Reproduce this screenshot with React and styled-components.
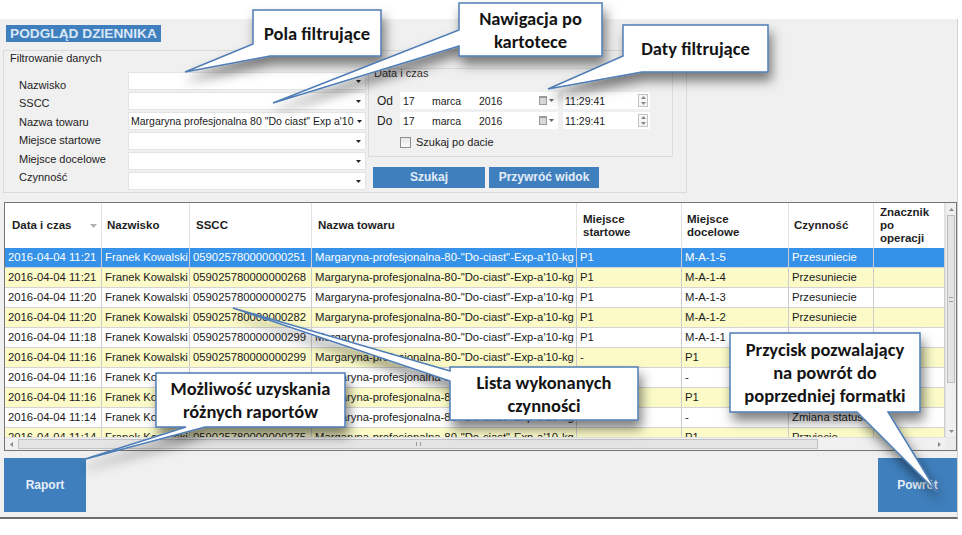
import React from 'react'
import styled, { createGlobalStyle } from 'styled-components'

const GlobalStyle = createGlobalStyle`
  html, body {
    margin: 0;
    padding: 0;
    background: #fff;
  }
  body {
    font-family: "Liberation Sans", Arial, sans-serif;
    color: #1a1a1a;
  }
`

const BLUE = '#3f7fbd'
const MARG = 'Margaryna-profesjonalna-80-"Do-ciast"-Exp-a\'10-kg'

const Screen = styled.div`
  position: relative;
  width: 962px;
  height: 535px;
  overflow: hidden;
  background: #fff;
  padding-top: 19px;
  box-sizing: border-box;
`

const Panel = styled.div`
  width: 958px;
  height: 500px;
  box-sizing: border-box;
  background: #f0f0f0;
  border-right: 1px solid #d2d2d2;
  border-bottom: 2px solid #6c6c6c;
  display: flex;
  flex-direction: column;
`

const Title = styled.div`
  align-self: flex-start;
  margin: 6px 0 0 6px;
  height: 17px;
  padding: 0 4px;
  background: ${BLUE};
  color: #d9e8f7;
  font: bold 13.7px/17px "Liberation Sans", Arial, sans-serif;
`

const FilterGroup = styled.div`
  margin: 8px 0 0 3px;
  width: 684px;
  height: 143px;
  box-sizing: border-box;
  border: 1px solid #dadada;
  display: flex;
  flex-direction: column;
`

const GroupCaption = styled.div`
  margin: 0 0 0 6px;
  height: 14px;
  font-size: 11px;
  line-height: 14px;
  color: #222;
`

const FilterBody = styled.div`
  display: flex;
  align-items: flex-start;
`

const LabelCol = styled.div`
  margin: 11px 0 0 15px;
  width: 109px;
  display: flex;
  flex-direction: column;
`

const FieldLabel = styled.div`
  height: 18.4px;
  font-size: 11px;
  line-height: 18.4px;
  color: #222;
`

const ComboCol = styled.div`
  margin-top: 7px;
  width: 238px;
  display: flex;
  flex-direction: column;
  gap: 2px;
`

const Combo = styled.div`
  height: 18px;
  box-sizing: border-box;
  background: #fff;
  border: 1px solid #e4e4e4;
  display: flex;
  align-items: center;
  justify-content: space-between;
  gap: 3px;
  padding: 0 4px 0 2px;
  font-size: 10.5px;
  color: #1a1a1a;
  white-space: nowrap;
  overflow: hidden;
`

const Arrow = ({ color = '#333', w = 5, h = 3, up }) => (
  <svg width={w} height={h} viewBox={`0 0 ${w} ${h}`} style={{ flex: 'none', display: 'block' }}>
    <polygon points={up ? `0,${h} ${w},${h} ${w / 2},0` : `0,0 ${w},0 ${w / 2},${h}`} fill={color} />
  </svg>
)

const RightCol = styled.div`
  margin: 3px 0 0 2px;
  display: flex;
  flex-direction: column;
`

const DateGroup = styled.div`
  width: 305px;
  height: 89px;
  box-sizing: border-box;
  border: 1px solid #dcdcdc;
  display: flex;
  flex-direction: column;
`

const DateCaption = styled.div`
  margin: -2px 0 0 5px;
  height: 12px;
  font-size: 11px;
  line-height: 12px;
  color: #333;
`

const DateRows = styled.div`
  margin-top: 13px;
  display: flex;
  flex-direction: column;
  gap: 3px;
`

const DateRow = styled.div`
  display: flex;
  align-items: center;
  height: 17px;
`

const DateLabel = styled.div`
  width: 31px;
  padding-left: 8px;
  box-sizing: border-box;
  font-size: 12px;
  color: #222;
`

const DateBox = styled.div`
  width: 158px;
  height: 17px;
  box-sizing: border-box;
  background: #fff;
  display: flex;
  align-items: center;
  padding: 0 4px 0 3px;
  font-size: 10.5px;
  color: #1a1a1a;
`

const DatePart = styled.span`
  width: ${p => p.$w}px;
  flex: none;
`

const CalIcon = styled.div`
  margin-left: auto;
  display: flex;
  align-items: center;
  gap: 2px;
  & > span {
    width: 8px;
    height: 9px;
    box-sizing: border-box;
    border: 1px solid #9a9a9a;
    border-top-width: 2px;
    background: #d8d8d8;
  }
`

const TimeBox = styled.div`
  margin-left: 5px;
  width: 87px;
  height: 17px;
  box-sizing: border-box;
  background: #fff;
  display: flex;
  align-items: center;
  justify-content: space-between;
  padding: 0 2px 0 2px;
  font-size: 10.5px;
  color: #1a1a1a;
`

const Spin = styled.div`
  width: 10px;
  height: 13px;
  box-sizing: border-box;
  border: 1px solid #c4c4c4;
  background: #f6f6f6;
  display: flex;
  flex-direction: column;
  align-items: center;
  justify-content: space-around;
`

const CheckRow = styled.label`
  margin: 7px 0 0 31px;
  display: flex;
  align-items: center;
  gap: 5px;
  font-size: 11px;
  color: #222;
`

const CheckBox = styled.span`
  width: 11px;
  height: 11px;
  box-sizing: border-box;
  border: 1px solid #8e8e8e;
  background: linear-gradient(#e6e6e6, #fbfbfb);
`

const ActionRow = styled.div`
  margin: 10px 0 0 5px;
  display: flex;
  gap: 4px;
`

const ActionButton = styled.div`
  width: ${p => p.$w}px;
  height: 21px;
  background: ${BLUE};
  color: #e2edf8;
  font: bold 12px/21px "Liberation Sans", Arial, sans-serif;
  text-align: center;
`

const Table = styled.div`
  margin: 9px 0 0 4px;
  width: 953px;
  height: 249px;
  box-sizing: border-box;
  border: 1px solid #767676;
  background: #fff;
  display: flex;
  flex-direction: column;
`

const TableTop = styled.div`
  height: 234px;
  display: flex;
`

const GridBody = styled.div`
  width: 940px;
  overflow: hidden;
  display: flex;
  flex-direction: column;
`

const HeaderRow = styled.div`
  flex: none;
  height: 45px;
  display: flex;
  background: #fff;
`

const HeadCell = styled.div`
  width: ${p => p.$w}px;
  flex: none;
  box-sizing: border-box;
  border-right: 1px solid #e3e3e3;
  padding: 0 4px 0 ${p => p.$pad || 6}px;
  display: flex;
  align-items: center;
  justify-content: space-between;
  font: bold 11.5px/13px "Liberation Sans", Arial, sans-serif;
  color: #1e1e1e;
`

const rowBg = { selected: '#3592e8', yellow: '#fcfbc8', white: '#fff' }

const Row = styled.div`
  flex: none;
  height: 20px;
  display: flex;
  box-sizing: border-box;
  border-bottom: 1px solid #d4d4d4;
  background: ${p => rowBg[p.$variant]};
  color: ${p => (p.$variant === 'selected' ? '#fff' : '#1a1a1a')};
`

const Cell = styled.div`
  width: ${p => p.$w}px;
  flex: none;
  box-sizing: border-box;
  border-right: 1px solid #cdcdcd;
  padding-left: 3px;
  font-size: 11.3px;
  line-height: 19px;
  white-space: nowrap;
  overflow: hidden;
`

const VScroll = styled.div`
  width: 11px;
  background: #f0f0f0;
  border-left: 1px solid #e2e2e2;
  box-sizing: border-box;
  display: flex;
  flex-direction: column;
  align-items: center;
`

const ScrollBtn = styled.div`
  flex: none;
  width: 100%;
  height: 12px;
  display: flex;
  align-items: center;
  justify-content: center;
`

const VThumb = styled.div`
  width: 8px;
  height: 168px;
  box-sizing: border-box;
  border: 1px solid #bdbdbd;
  background: #e4e4e4;
  display: flex;
  align-items: center;
  justify-content: center;
  &::after {
    content: '';
    width: 4px;
    height: 5px;
    border-top: 1px solid #9c9c9c;
    border-bottom: 1px solid #9c9c9c;
    box-sizing: border-box;
  }
`

const HScroll = styled.div`
  height: 13px;
  display: flex;
  align-items: center;
  background: #f0f0f0;
  border-top: 1px solid #e2e2e2;
  box-sizing: border-box;
`

const HThumb = styled.div`
  margin-left: 1px;
  width: 800px;
  height: 10px;
  box-sizing: border-box;
  border: 1px solid #c2c2c2;
  background: #e4e4e4;
  display: flex;
  align-items: center;
  justify-content: center;
  &::after {
    content: '';
    width: 5px;
    height: 4px;
    border-left: 1px solid #9c9c9c;
    border-right: 1px solid #9c9c9c;
    box-sizing: border-box;
  }
`

const Corner = styled.div`
  width: 11px;
  height: 100%;
  background: #ececec;
`

const BottomBar = styled.div`
  margin-top: 7px;
  padding-left: 4px;
  display: flex;
  justify-content: space-between;
`

const BigButton = styled.div`
  width: ${p => p.$w}px;
  height: 54px;
  background: ${BLUE};
  color: #e6eef8;
  font: bold 12px/54px "Liberation Sans", Arial, sans-serif;
  text-align: center;
`

const CalloutLayer = styled.div`
  position: absolute;
  inset: 0;
  pointer-events: none;
`

const CalloutText = styled.div`
  position: absolute;
  display: flex;
  flex-direction: column;
  align-items: center;
  justify-content: center;
  font: bold 18.5px/23px Carlito, Lato, "Open Sans", sans-serif;
  color: #141414;
  white-space: nowrap;
`

const columns = [
  { w: 97, title: 'Data i czas', pad: 7, sort: true },
  { w: 88, title: 'Nazwisko', pad: 5 },
  { w: 122, title: 'SSCC' },
  { w: 265, title: 'Nazwa towaru' },
  { w: 105, title: ['Miejsce', 'startowe'] },
  { w: 107, title: ['Miejsce', 'docelowe'], pad: 5 },
  { w: 85, title: 'Czynność', pad: 5 },
  { w: 71, title: ['Znacznik', 'po', 'operacji'] },
]

const rows = [
  ['2016-04-04 11:21', '059025780000000251', 'P1', 'M-A-1-5', 'Przesuniecie'],
  ['2016-04-04 11:21', '059025780000000268', 'P1', 'M-A-1-4', 'Przesuniecie'],
  ['2016-04-04 11:20', '059025780000000275', 'P1', 'M-A-1-3', 'Przesuniecie'],
  ['2016-04-04 11:20', '059025780000000282', 'P1', 'M-A-1-2', 'Przesuniecie'],
  ['2016-04-04 11:18', '059025780000000299', 'P1', 'M-A-1-1', 'Przesuniecie'],
  ['2016-04-04 11:16', '059025780000000299', '-', 'P1', 'Przyjecie'],
  ['2016-04-04 11:16', '059025780000000299', '-', '-', 'Zmiana statusu'],
  ['2016-04-04 11:16', '059025780000000282', '-', 'P1', 'Przyjecie'],
  ['2016-04-04 11:14', '059025780000000282', '-', '-', 'Zmiana statusu'],
  ['2016-04-04 11:14', '059025780000000275', '-', 'P1', 'Przyjecie'],
]

const filters = [
  ['Nazwisko', ''],
  ['SSCC', ''],
  ['Nazwa towaru', 'Margaryna profesjonalna 80 "Do ciast" Exp a\'10'],
  ['Miejsce startowe', ''],
  ['Miejsce docelowe', ''],
  ['Czynność', ''],
]

const callouts = [
  { x: 253, y: 10, w: 128, h: 46, lines: ['Pola filtrujące'], d: 'M253,10 H381 V56 H270 L185,72 L253,44 Z' },
  { x: 459, y: 3, w: 143, h: 53, lines: ['Nawigacja po', 'kartotece'], d: 'M459,3 H602 V56 H459 V46 L273,103 L459,30 Z' },
  { x: 623, y: 25, w: 145, h: 47, lines: ['Daty filtrujące'], d: 'M623,25 H768 V72 H642 L548,89 L623,56 Z' },
  { x: 450, y: 367, w: 188, h: 53, lines: ['Lista wykonanych', 'czynności'], d: 'M450,367 H638 V420 H450 V381 L233,308 L450,371 Z' },
  { x: 156, y: 373, w: 189, h: 54, lines: ['Możliwość uzyskania', 'różnych raportów'], d: 'M156,373 H345 V427 H205 L82,460 L186,427 H156 Z' },
  { x: 730, y: 333, w: 190, h: 79, lines: ['Przycisk pozwalający', 'na powrót do', 'poprzedniej formatki'], d: 'M730,333 H920 V412 H888 L937,492 L857,412 H730 Z' },
]

const DateLine = ({ label }) => (
  <DateRow>
    <DateLabel>{label}</DateLabel>
    <DateBox>
      <DatePart $w={29}>17</DatePart>
      <DatePart $w={47}>marca</DatePart>
      <DatePart $w={30}>2016</DatePart>
      <CalIcon>
        <span />
        <Arrow color="#666" w={5} h={3} />
      </CalIcon>
    </DateBox>
    <TimeBox>
      11:29:41
      <Spin>
        <Arrow color="#888" w={5} h={3} up />
        <Arrow color="#888" w={5} h={3} />
      </Spin>
    </TimeBox>
  </DateRow>
)

export default function App() {
  return (
    <Screen>
      <GlobalStyle />
      <Panel>
        <Title>PODGLĄD DZIENNIKA</Title>

        <FilterGroup>
          <GroupCaption>Filtrowanie danych</GroupCaption>
          <FilterBody>
            <LabelCol>
              {filters.map(([label]) => (
                <FieldLabel key={label}>{label}</FieldLabel>
              ))}
            </LabelCol>
            <ComboCol>
              {filters.map(([label, value]) => (
                <Combo key={label}>
                  <span>{value}</span>
                  <Arrow color="#222" />
                </Combo>
              ))}
            </ComboCol>
            <RightCol>
              <DateGroup>
                <DateCaption>Data i czas</DateCaption>
                <DateRows>
                  <DateLine label="Od" />
                  <DateLine label="Do" />
                </DateRows>
                <CheckRow>
                  <CheckBox />
                  Szukaj po dacie
                </CheckRow>
              </DateGroup>
              <ActionRow>
                <ActionButton $w={112}>Szukaj</ActionButton>
                <ActionButton $w={110}>Przywróć widok</ActionButton>
              </ActionRow>
            </RightCol>
          </FilterBody>
        </FilterGroup>

        <Table>
          <TableTop>
            <GridBody>
              <HeaderRow>
                {columns.map((c, i) => (
                  <HeadCell key={i} $w={c.w} $pad={c.pad}>
                    <span>
                      {Array.isArray(c.title)
                        ? c.title.map((t, j) => <div key={j}>{t}</div>)
                        : c.title}
                    </span>
                    {c.sort && <Arrow color="#b0b0b0" w={7} h={4} />}
                  </HeadCell>
                ))}
              </HeaderRow>
              {rows.map((r, i) => {
                const variant = i === 0 ? 'selected' : i % 2 ? 'yellow' : 'white'
                const cells = [r[0], 'Franek Kowalski', r[1], MARG, r[2], r[3], r[4], '']
                return (
                  <Row key={i} $variant={variant}>
                    {cells.map((v, j) => (
                      <Cell key={j} $w={columns[j].w}>{v}</Cell>
                    ))}
                  </Row>
                )
              })}
            </GridBody>
            <VScroll>
              <ScrollBtn><Arrow color="#8a8a8a" w={5} h={3} up /></ScrollBtn>
              <VThumb />
              <ScrollBtn style={{ marginTop: 'auto' }}><Arrow color="#8a8a8a" w={5} h={3} /></ScrollBtn>
            </VScroll>
          </TableTop>
          <HScroll>
            <ScrollBtn style={{ width: 12 }}>
              <svg width="3" height="5"><polygon points="3,0 3,5 0,2.5" fill="#8a8a8a" /></svg>
            </ScrollBtn>
            <HThumb />
            <ScrollBtn style={{ width: 12, marginLeft: 'auto' }}>
              <svg width="3" height="5"><polygon points="0,0 0,5 3,2.5" fill="#8a8a8a" /></svg>
            </ScrollBtn>
            <Corner />
          </HScroll>
        </Table>

        <BottomBar>
          <BigButton $w={82}>Raport</BigButton>
          <BigButton $w={79}>Powrót</BigButton>
        </BottomBar>
      </Panel>

      <CalloutLayer>
        <svg width="962" height="535" style={{ position: 'absolute', left: 0, top: 0 }}>
          <defs>
            <filter id="shade" x="-20%" y="-20%" width="140%" height="160%">
              <feDropShadow dx="3" dy="8" stdDeviation="6" floodColor="#000" floodOpacity="0.5" />
            </filter>
          </defs>
          {callouts.map((c, i) => (
            <path key={i} d={c.d} fill="#fff" stroke="#4f7db5" strokeWidth="1.5" filter="url(#shade)" />
          ))}
        </svg>
        {callouts.map((c, i) => (
          <CalloutText key={i} style={{ left: c.x, top: c.y, width: c.w, height: c.h }}>
            {c.lines.map(l => (
              <span key={l}>{l}</span>
            ))}
          </CalloutText>
        ))}
      </CalloutLayer>
    </Screen>
  )
}
